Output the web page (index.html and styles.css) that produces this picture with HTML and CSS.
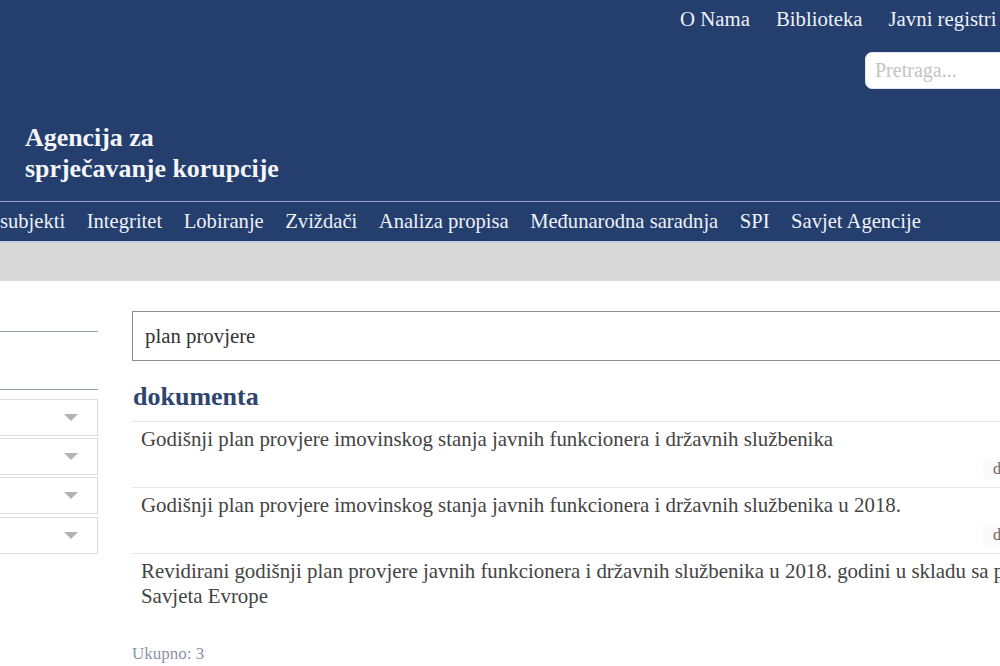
FILE: index.html
```html
<!DOCTYPE html>
<html lang="sr">
<head>
<meta charset="utf-8">
<title>Agencija za sprječavanje korupcije – Pretraga</title>
<link rel="stylesheet" href="styles.css">
</head>
<body>
<div class="page">
  <header class="site-header">
    <div class="header-top">
      <div class="brand">Agencija za<br>sprječavanje korupcije</div>
      <div class="utility">
        <nav class="util-links">
          <a href="#">O Nama</a>
          <a href="#">Biblioteka</a>
          <a href="#">Javni registri</a>
        </nav>
        <input class="site-search" type="text" placeholder="Pretraga...">
      </div>
    </div>
    <nav class="main-nav">
      <a href="#">subjekti</a>
      <a href="#">Integritet</a>
      <a href="#">Lobiranje</a>
      <a href="#">Zviždači</a>
      <a href="#">Analiza propisa</a>
      <a href="#">Međunarodna saradnja</a>
      <a href="#">SPI</a>
      <a href="#">Savjet Agencije</a>
    </nav>
  </header>
  <div class="band"></div>
  <main class="content">
    <aside class="sidebar">
      <div class="side-block first"></div>
      <div class="side-block second"></div>
      <div class="filters">
        <div class="select"><span class="caret"></span></div>
        <div class="select"><span class="caret"></span></div>
        <div class="select"><span class="caret"></span></div>
        <div class="select"><span class="caret"></span></div>
      </div>
    </aside>
    <section class="results">
      <input class="query" type="text" value="plan provjere">
      <h2 class="group-title">dokumenta</h2>
      <ul class="result-list">
        <li class="result">
          <a class="result-title" href="#">Godišnji plan provjere imovinskog stanja javnih funkcionera i državnih službenika</a>
          <div class="result-meta"><span class="tag">d</span></div>
        </li>
        <li class="result">
          <a class="result-title" href="#">Godišnji plan provjere imovinskog stanja javnih funkcionera i državnih službenika u 2018.</a>
          <div class="result-meta"><span class="tag">d</span></div>
        </li>
        <li class="result last">
          <a class="result-title" href="#">Revidirani godišnji plan provjere javnih funkcionera i državnih službenika u 2018. godini u skladu sa p<br>Savjeta Evrope</a>
        </li>
      </ul>
      <p class="total">Ukupno: 3</p>
    </section>
  </main>
</div>
</body>
</html>
```

FILE: styles.css
```css
html, body {
  margin: 0;
  padding: 0;
  overflow: hidden;
  background: #ffffff;
}

.page {
  width: 1300px;
  font-family: "Liberation Serif", "Times New Roman", serif;
}

a {
  text-decoration: none;
  color: inherit;
}

/* ---------- header ---------- */
.site-header {
  background: #243e6e;
  color: #ffffff;
}

.header-top {
  display: flex;
  height: 201px;
}

.brand {
  flex: 0 0 680px;
  box-sizing: border-box;
  padding-left: 25px;
  align-self: flex-end;
  padding-bottom: 17px;
  font-weight: bold;
  font-size: 25.9px;
  line-height: 31px;
  color: #f4f6fb;
}

.utility {
  width: 400px;
  display: flex;
  flex-direction: column;
  align-items: flex-start;
}

.util-links {
  display: flex;
  gap: 26px;
  padding-top: 6px;
}

.util-links a {
  font-size: 20.8px;
  line-height: 26px;
  color: #eef1f8;
  white-space: nowrap;
}

.site-search {
  margin-top: 20px;
  margin-left: 185px;
  width: 200px;
  height: 37px;
  box-sizing: border-box;
  border: 1px solid #dfe4ee;
  border-radius: 7px;
  background: #ffffff;
  padding: 0 9px;
  font-family: "Liberation Serif", "Times New Roman", serif;
  font-size: 20px;
  color: #333;
  outline: none;
}

.site-search::placeholder {
  color: #c4c4c4;
}

.main-nav {
  display: flex;
  gap: 21.5px;
  height: 39px;
  border-top: 1px solid #97a9cb;
  border-bottom: 2px solid #c6d0e2;
  align-items: center;
}

.main-nav a {
  font-size: 20.6px;
  line-height: 39px;
  color: #eef1f8;
  white-space: nowrap;
}

.band {
  height: 38px;
  background: #d9d9d9;
}

/* ---------- content ---------- */
.content {
  display: flex;
  padding-top: 30px;
}

.sidebar {
  flex: 0 0 98px;
}

.side-block {
  border-bottom: 1px solid #8ea2b0;
}

.side-block.first {
  height: 20px;
}

.side-block.second {
  height: 57px;
}

.filters {
  margin-top: 9px;
  display: flex;
  flex-direction: column;
  gap: 2px;
}

.select {
  height: 37px;
  box-sizing: border-box;
  border: 1px solid #dcdcdc;
  border-left: none;
  display: flex;
  align-items: center;
  justify-content: flex-end;
  padding-right: 19px;
}

.select:last-child {
  margin-top: 1px;
}

.caret {
  width: 0;
  height: 0;
  border-left: 7px solid transparent;
  border-right: 7px solid transparent;
  border-top: 7px solid #b3b3b3;
}

.results {
  margin-left: 34px;
  width: 1100px;
}

.query {
  display: block;
  width: 100%;
  height: 50px;
  box-sizing: border-box;
  border: 1px solid #8f8f8f;
  padding: 0 12px;
  font-family: "Liberation Serif", "Times New Roman", serif;
  font-size: 20.8px;
  color: #333333;
  background: #ffffff;
  outline: none;
}

.group-title {
  margin: 21px 0 9px;
  padding-left: 1px;
  font-size: 26px;
  line-height: 30px;
  font-weight: bold;
  color: #2e4570;
}

.result-list {
  list-style: none;
  margin: 0;
  padding: 0;
}

.result {
  border-top: 1px solid #e6e6e6;
  padding: 5px 10px 8px 9px;
}

.result-title {
  display: block;
  font-size: 20.9px;
  line-height: 25px;
  color: #444444;
  white-space: nowrap;
}

.result-meta {
  margin-top: 7px;
  display: flex;
  padding-left: 842px;
}

.tag {
  font-size: 16px;
  line-height: 20px;
  color: #666666;
  background: #fafafa;
  padding: 0 20px 0 10px;
}

.result.last {
  padding-bottom: 35px;
}

.total {
  margin: 0;
  font-size: 17px;
  line-height: 20px;
  color: #8b95a8;
}
```
